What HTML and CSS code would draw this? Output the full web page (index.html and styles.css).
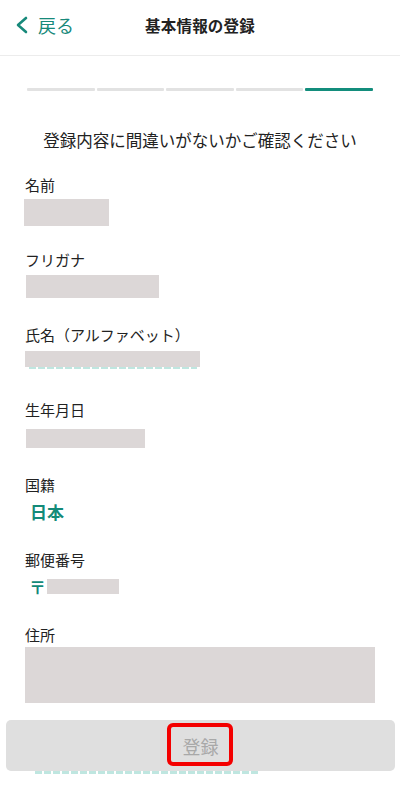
FILE: index.html
```html
<!DOCTYPE html>
<html lang="ja">
<head>
<meta charset="utf-8">
<title>基本情報の登録</title>
<link rel="stylesheet" href="styles.css">
</head>
<body>
<div class="screen">
  <header class="header">
    <a class="back">
      <svg class="chev" width="14" height="18" viewBox="0 0 14 18"><polyline points="11,2 3,9 11,16" fill="none" stroke="#17897a" stroke-width="2.6" stroke-linecap="round" stroke-linejoin="round"/></svg>
      <span>戻る</span>
    </a>
    <h1 class="title">基本情報の登録</h1>
  </header>

  <div class="progress">
    <span class="seg"></span><span class="seg"></span><span class="seg"></span><span class="seg"></span><span class="seg seg--on"></span>
  </div>

  <p class="lead">登録内容に間違いがないかご確認ください</p>

  <div class="fields">
    <div class="field">
      <div class="label">名前</div>
      <div class="mask mask--name"></div>
    </div>
    <div class="field">
      <div class="label">フリガナ</div>
      <div class="mask mask--kana"></div>
    </div>
    <div class="field">
      <div class="label">氏名（アルファベット）</div>
      <div class="mask mask--alpha"></div>
      <div class="peek"></div>
    </div>
    <div class="field">
      <div class="label">生年月日</div>
      <div class="mask mask--birth"></div>
    </div>
    <div class="field">
      <div class="label">国籍</div>
      <div class="value">日本</div>
    </div>
    <div class="field">
      <div class="label">郵便番号</div>
      <div class="zip"><span class="zip-mark">〒</span><span class="mask mask--zip"></span></div>
    </div>
    <div class="field field--last">
      <div class="label">住所</div>
      <div class="mask mask--addr"></div>
    </div>
  </div>
  <div class="peek peek--bottom"></div>

  <button class="submit"><span>登録</span></button>
  <div class="highlight"></div>
</div>
</body>
</html>
```

FILE: styles.css
```css
* { box-sizing: border-box; }
html, body { margin: 0; padding: 0; background: #fff; }
body {
  font-family: "Noto Sans CJK JP", "Noto Sans", sans-serif;
  color: #222;
}
.screen {
  position: relative;
  width: 400px;
  height: 785px;
  overflow: hidden;
}
.header {
  position: relative;
  height: 56px;
  border-bottom: 1px solid #ececec;
  display: flex;
  align-items: center;
  justify-content: center;
}
.back {
  position: absolute;
  left: 15px;
  top: 13px;
  display: flex;
  align-items: center;
  gap: 9px;
  color: #17897a;
  font-size: 18px;
  line-height: 24px;
}
.chev { display: block; }
.title {
  margin: 0 0 6px;
  font-size: 15.5px;
  font-weight: 700;
  color: #222;
  letter-spacing: 0.2px;
}
.progress {
  display: flex;
  gap: 2px;
  margin: 32px 27px 0;
  height: 3px;
}
.seg {
  flex: 1;
  background: #e2e2e2;
  border-radius: 1px;
}
.seg--on { background: #138d7c; }
.lead {
  margin: 37px 0 0;
  text-align: center;
  font-size: 16.5px;
  line-height: 24px;
  color: #222;
}
.fields { margin-top: 23px; }
.field {
  height: 75px;
  padding-left: 25px;
}
.label {
  font-size: 15px;
  line-height: 20px;
  color: #222;
}
.mask { background: #dcd7d7; display: block; }
.mask--name { width: 85px; height: 27px; margin-top: 4px; margin-left: -1px; }
.mask--kana { width: 133px; height: 23px; margin-top: 5px; margin-left: 1px; }
.mask--alpha { width: 175px; height: 16px; margin-top: 6px; }
.peek {
  width: 168px;
  height: 2px;
  margin-left: 4px;
  background: repeating-linear-gradient(90deg, #bfe6e0 0 7px, transparent 7px 9px);
}
.mask--birth { width: 119px; height: 19px; margin-top: 9px; margin-left: 1px; }
.value {
  margin-top: 6px;
  margin-left: 5px;
  font-size: 17px;
  line-height: 22px;
  font-weight: 700;
  color: #138a78;
}
.zip {
  display: flex;
  align-items: center;
  margin-top: 9px;
  height: 15px;
}
.zip-mark {
  color: #138a78;
  font-weight: 700;
  font-size: 17px;
  line-height: 15px;
  margin-left: 4px;
  width: 18px;
}
.mask--zip { width: 72px; height: 15px; }
.field--last { height: auto; }
.mask--addr { width: 350px; height: 56px; margin-top: 2px; }
.peek--bottom {
  width: 225px;
  margin: 68px 0 0 35px;
  height: 3px;
}
.submit {
  position: absolute;
  left: 6px;
  top: 720px;
  width: 389px;
  height: 51px;
  border: none;
  border-radius: 5px;
  background: #dfdfdf;
  color: #a8a8a8;
  font-family: "Noto Sans CJK JP", sans-serif;
  font-size: 18px;
  padding: 0;
  display: flex;
  align-items: center;
  justify-content: center;
}
.highlight {
  position: absolute;
  left: 167px;
  top: 723px;
  width: 66px;
  height: 43px;
  border: 4px solid #f40000;
  border-radius: 6px;
}
```
